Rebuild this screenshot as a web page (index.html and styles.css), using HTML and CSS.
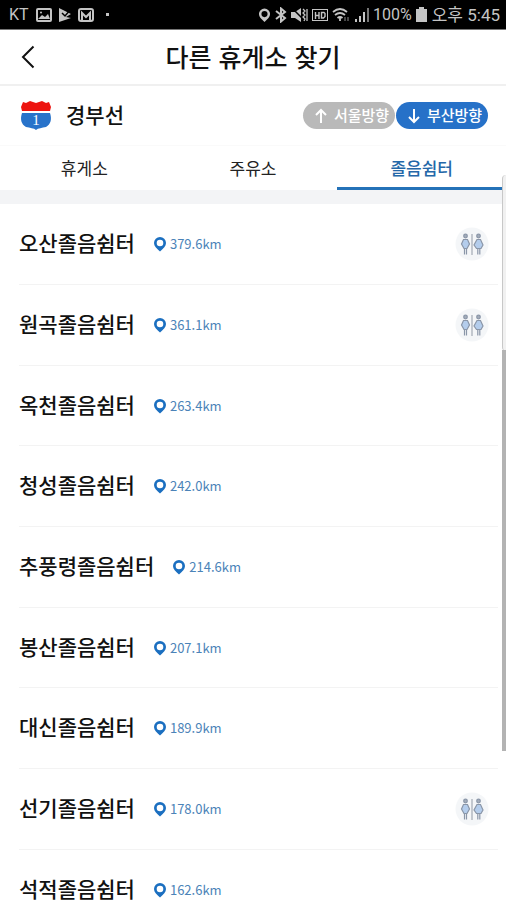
FILE: index.html
```html
<!DOCTYPE html>
<html lang="ko">
<head>
<meta charset="utf-8">
<meta name="viewport" content="width=device-width, initial-scale=1">
<title>다른 휴게소 찾기</title>
<link rel="stylesheet" href="styles.css">
</head>
<body>
<svg class="defs" aria-hidden="true">
  <symbol id="pin" viewBox="0 0 14 16">
    <path fill-rule="evenodd" d="M7 1a6 6 0 0 0-6 6c0 3 2.500 5.500 6 8.500 3.500-3 6-5.500 6-8.500a6 6 0 0 0-6-6zm0 2.700a3.300 3.300 0 1 1 0 6.600 3.300 3.300 0 0 1 0-6.600z"/>
  </symbol>
  <symbol id="toilet" viewBox="0 0 34 34">
    <circle cx="17" cy="17" r="16.500" fill="#f4f6f8"/>
    <path d="M17 7v21" stroke="#b3b8c2" stroke-width="1.500"/>
    <g stroke="#8a96a8" stroke-width="1.200" fill="#b4cdec">
      <circle cx="10.500" cy="9" r="1.800" fill="#a4adba"/>
      <path d="M8.500 12.500h4l2 4.500-2.500 4.500h-3L6.500 17z"/>
      <path d="M9.500 21.500V27.500M11.500 21.500V27.500" fill="none"/>
      <circle cx="23.500" cy="9" r="1.800" fill="#a4adba"/>
      <path d="M22 12.500h3.500L28 18l-2 3.500h-4.500L19 18z"/>
      <path d="M22.800 21.500V27.500M24.800 21.500V27.500" fill="none"/>
    </g>
  </symbol>
</svg>
<div class="screen">
  <div class="status">
    <div class="status-side">
      <span class="carrier">KT</span>
      <svg width="16" height="14" viewBox="0 0 16 14"><rect x="1" y="1" width="14" height="12" rx="1" fill="none" stroke="currentColor" stroke-width="2"/><path d="M2 11l4-4 3 2 3-3 2 5z" fill="currentColor"/><circle cx="5" cy="4.500" r="1" fill="currentColor"/></svg>
      <svg class="apart" width="14" height="14" viewBox="0 0 14 14"><path d="M1 0l12 6-5 3 5 1-12 4z" fill="currentColor"/><path d="M4 5l3 3 6-7" fill="none" stroke="#000" stroke-width="1.500"/></svg>
      <svg class="apart" width="16" height="14" viewBox="0 0 16 14"><rect x="1" y="1" width="14" height="12" rx="2" fill="none" stroke="currentColor" stroke-width="2"/><path d="M4 12V5l4 4 4-4v7" fill="none" stroke="currentColor" stroke-width="2"/></svg>
      <span class="dot"></span>
    </div>
    <div class="status-side">
      <svg width="13" height="16" viewBox="0 0 14 16" fill="currentColor"><use href="#pin"/></svg>
      <svg class="gap" width="12" height="16" viewBox="0 0 12 16" fill="none" stroke="currentColor" stroke-width="2"><path d="M1 4l9 7-4 3.500v-13L10 5l-9 7"/></svg>
      <svg class="gap" width="17" height="16" viewBox="0 0 17 16"><path d="M0 5h4l6-4v14l-6-4H0z" fill="currentColor"/><path d="M1 1l13 13" stroke="#000" stroke-width="1.500"/><path d="M12 2l2 2-2 2 2 2-2 2 2 2-1 2M16 2v12" fill="none" stroke="currentColor" stroke-width="1.300"/></svg>
      <svg class="gap" width="16" height="14" viewBox="0 0 16 14" fill="none" stroke="currentColor"><rect x=".5" y="1.500" width="15" height="11"/><path d="M3.500 4v7M7 4v7M3.500 7.500H7M9.500 4.500V10h2l1.500-1.500v-3L12 4.500z" stroke-width="1.400"/></svg>
      <svg class="gap" width="18" height="16" viewBox="0 0 18 16" fill="none" stroke="currentColor" stroke-width="1.800"><path d="M1 5q7-6 14 0M3 8q5-4 10 0M5.500 11q2.500-2 5 0"/><path d="M8 11v3"/><path d="M13 10v4M16 10v4" opacity=".4"/></svg>
      <svg class="gap" width="16" height="15" viewBox="0 0 16 15" fill="currentColor"><path d="M1 12h2v3H1zM5 9h2v6H5zM9 5h2v10H9z"/><path d="M13 1h2v14h-2z" opacity=".6"/></svg>
      <span class="percent">100%</span>
      <svg width="11" height="15" viewBox="0 0 11 15"><path d="M3 0h5v2h3v13H0V2h3z" fill="currentColor"/></svg>
      <span class="clock">오후 5:45</span>
    </div>
  </div>

  <header class="titlebar">
    <button class="back" type="button" aria-label="뒤로"><svg width="14" height="24" viewBox="0 0 14 24"><path d="M12.500 1.500L2 12l10.500 10.500" fill="none" stroke="#111" stroke-width="2"/></svg></button>
    <h1>다른 휴게소 찾기</h1>
  </header>

  <section class="route">
    <svg width="32" height="30" viewBox="0 0 32 30">
      <path d="M3 1l3 1 4-2 6 2 6-2 4 2 3-1 2 5-1 4H2L1 6z" fill="#ed1410"/>
      <path d="M2 12h28c2 6 1 11-4 14-4 1-8 1-10 3-2-2-6-2-10-3-5-3-6-8-4-14z" fill="#2873ca"/>
      <text class="shield" x="16" y="24" text-anchor="middle">1</text>
    </svg>
    <h2>경부선</h2>
    <div class="directions">
      <button class="pill" type="button"><svg width="12" height="16" viewBox="0 0 12 16"><path d="M6 15V2M1 7l5-5 5 5"/></svg><span>서울방향</span></button>
      <button class="pill active" type="button"><svg width="12" height="16" viewBox="0 0 12 16"><path d="M6 1v13M1 9l5 5 5-5"/></svg><span>부산방향</span></button>
    </div>
  </section>

  <nav class="tabs">
    <a href="#rest">휴게소</a>
    <a href="#fuel">주유소</a>
    <a class="current" href="#nap" aria-current="page">졸음쉼터</a>
  </nav>

  <ul class="list" id="nap">
    <li><h3>오산졸음쉼터</h3><span class="distance"><svg><use href="#pin"/></svg>379.6km</span><svg class="toilet"><use href="#toilet"/></svg></li>
    <li><h3>원곡졸음쉼터</h3><span class="distance"><svg><use href="#pin"/></svg>361.1km</span><svg class="toilet"><use href="#toilet"/></svg></li>
    <li><h3>옥천졸음쉼터</h3><span class="distance"><svg><use href="#pin"/></svg>263.4km</span></li>
    <li><h3>청성졸음쉼터</h3><span class="distance"><svg><use href="#pin"/></svg>242.0km</span></li>
    <li><h3>추풍령졸음쉼터</h3><span class="distance"><svg><use href="#pin"/></svg>214.6km</span></li>
    <li><h3>봉산졸음쉼터</h3><span class="distance"><svg><use href="#pin"/></svg>207.1km</span></li>
    <li><h3>대신졸음쉼터</h3><span class="distance"><svg><use href="#pin"/></svg>189.9km</span></li>
    <li><h3>선기졸음쉼터</h3><span class="distance"><svg><use href="#pin"/></svg>178.0km</span><svg class="toilet"><use href="#toilet"/></svg></li>
    <li><h3>석적졸음쉼터</h3><span class="distance"><svg><use href="#pin"/></svg>162.6km</span></li>
  </ul>
  <div class="edge-handle"></div>
  <div class="scroll-thumb"></div>
</div>
</body>
</html>
```
FILE: styles.css
```css
* {
  box-sizing: border-box;
}

body {
  margin: 0;
  background: #fff;
  color: #111;
  font-family: "Noto Sans CJK KR", sans-serif;
}

h1, h2, h3 {
  margin: 0;
  font-weight: 500;
}

button {
  border: 0;
  padding: 0;
  background: none;
  font-family: inherit;
}

svg {
  flex: none;
}

.defs {
  position: absolute;
  width: 0;
  height: 0;
}

.screen {
  position: relative;
  display: flex;
  flex-direction: column;
  height: 100vh;
  overflow: hidden;
}

.status {
  flex: none;
  display: flex;
  justify-content: space-between;
  height: 30px;
  padding: 0 6px 0 9px;
  border-bottom: 1px solid #777;
  background: #000;
  color: #c4c4c4;
  font-family: Roboto, "Noto Sans CJK KR", sans-serif;
  font-size: 17px;
  line-height: 30px;
  white-space: nowrap;
}

.status-side {
  display: flex;
  align-items: center;
}

.gap {
  margin-left: 4px;
}

.apart {
  margin-left: 6px;
}

.carrier {
  margin-right: 7px;
  font-size: 16px;
}

.dot {
  width: 3px;
  height: 3px;
  margin-left: 12px;
  background: #c4c4c4;
}

.percent {
  margin: 0 4px 0 3px;
  font-size: 16px;
}

.clock {
  margin-left: 5px;
}

.titlebar {
  flex: none;
  display: grid;
  grid-template-columns: 56px 1fr 56px;
  align-items: center;
  height: 56px;
  border-bottom: 2px solid #f0f0f0;
}

.titlebar h1 {
  padding-bottom: 2px;
  font-size: 25px;
  line-height: 36px;
  text-align: center;
}

.back {
  display: flex;
  justify-content: center;
}

.route {
  flex: none;
  display: flex;
  align-items: center;
  height: 60px;
  padding: 0 18px 0 20px;
  border-bottom: 1px solid #fafafa;
}

.shield {
  fill: #fff;
  font-family: "Liberation Serif", serif;
  font-size: 15px;
}

.route h2 {
  margin-left: 14px;
  padding-bottom: 4px;
  font-size: 21px;
  line-height: 30px;
}

.directions {
  display: flex;
  gap: 1px;
  margin-left: auto;
}

.pill {
  display: flex;
  align-items: center;
  justify-content: center;
  gap: 7px;
  width: 92px;
  height: 27px;
  padding-left: 6px;
  border-radius: 14px;
  background: #b9b9b9;
  color: #fff;
  font-size: 15px;
  font-weight: 500;
  white-space: nowrap;
}

.pill span {
  padding-bottom: 3px;
}

.pill.active {
  background: #2671c8;
}

.pill path {
  fill: none;
  stroke: #fff;
  stroke-width: 2;
}

.tabs {
  flex: none;
  display: grid;
  grid-template-columns: repeat(3, 1fr);
  border-bottom: 14px solid #f3f4f6;
}

.tabs a {
  height: 44px;
  color: #222;
  font-size: 17px;
  line-height: 44px;
  text-align: center;
  text-decoration: none;
}

.tabs .current {
  border-bottom: 3px solid #2472b8;
  color: #2467a8;
  font-weight: 500;
}

.list {
  margin: 0;
  padding: 0 8px 0 19px;
  list-style: none;
}

.list li {
  display: flex;
  align-items: center;
  height: 81px;
  padding-right: 9px;
  border-bottom: 1px solid #f3f3f3;
}

.list li:nth-child(3n) {
  height: 80px;
}

.list h3 {
  padding-bottom: 4px;
  font-size: 21px;
  line-height: 32px;
}

.distance {
  display: flex;
  align-items: center;
  gap: 3px;
  margin-left: 18px;
  color: #4b83b8;
  font-size: 13px;
  line-height: 20px;
}

.distance svg {
  width: 14px;
  height: 16px;
  fill: #1b6fc0;
}

.toilet {
  width: 34px;
  height: 34px;
  margin-left: auto;
}

.edge-handle {
  position: absolute;
  top: 175px;
  right: 0;
  width: 4px;
  height: 176px;
  border-left: 1px solid #c8c8c8;
  border-radius: 6px 0 0 6px;
  background: #f1f1f1;
}

.scroll-thumb {
  position: absolute;
  top: 350px;
  right: 0;
  width: 4px;
  height: 401px;
  background: #b3b3b3;
}
```
